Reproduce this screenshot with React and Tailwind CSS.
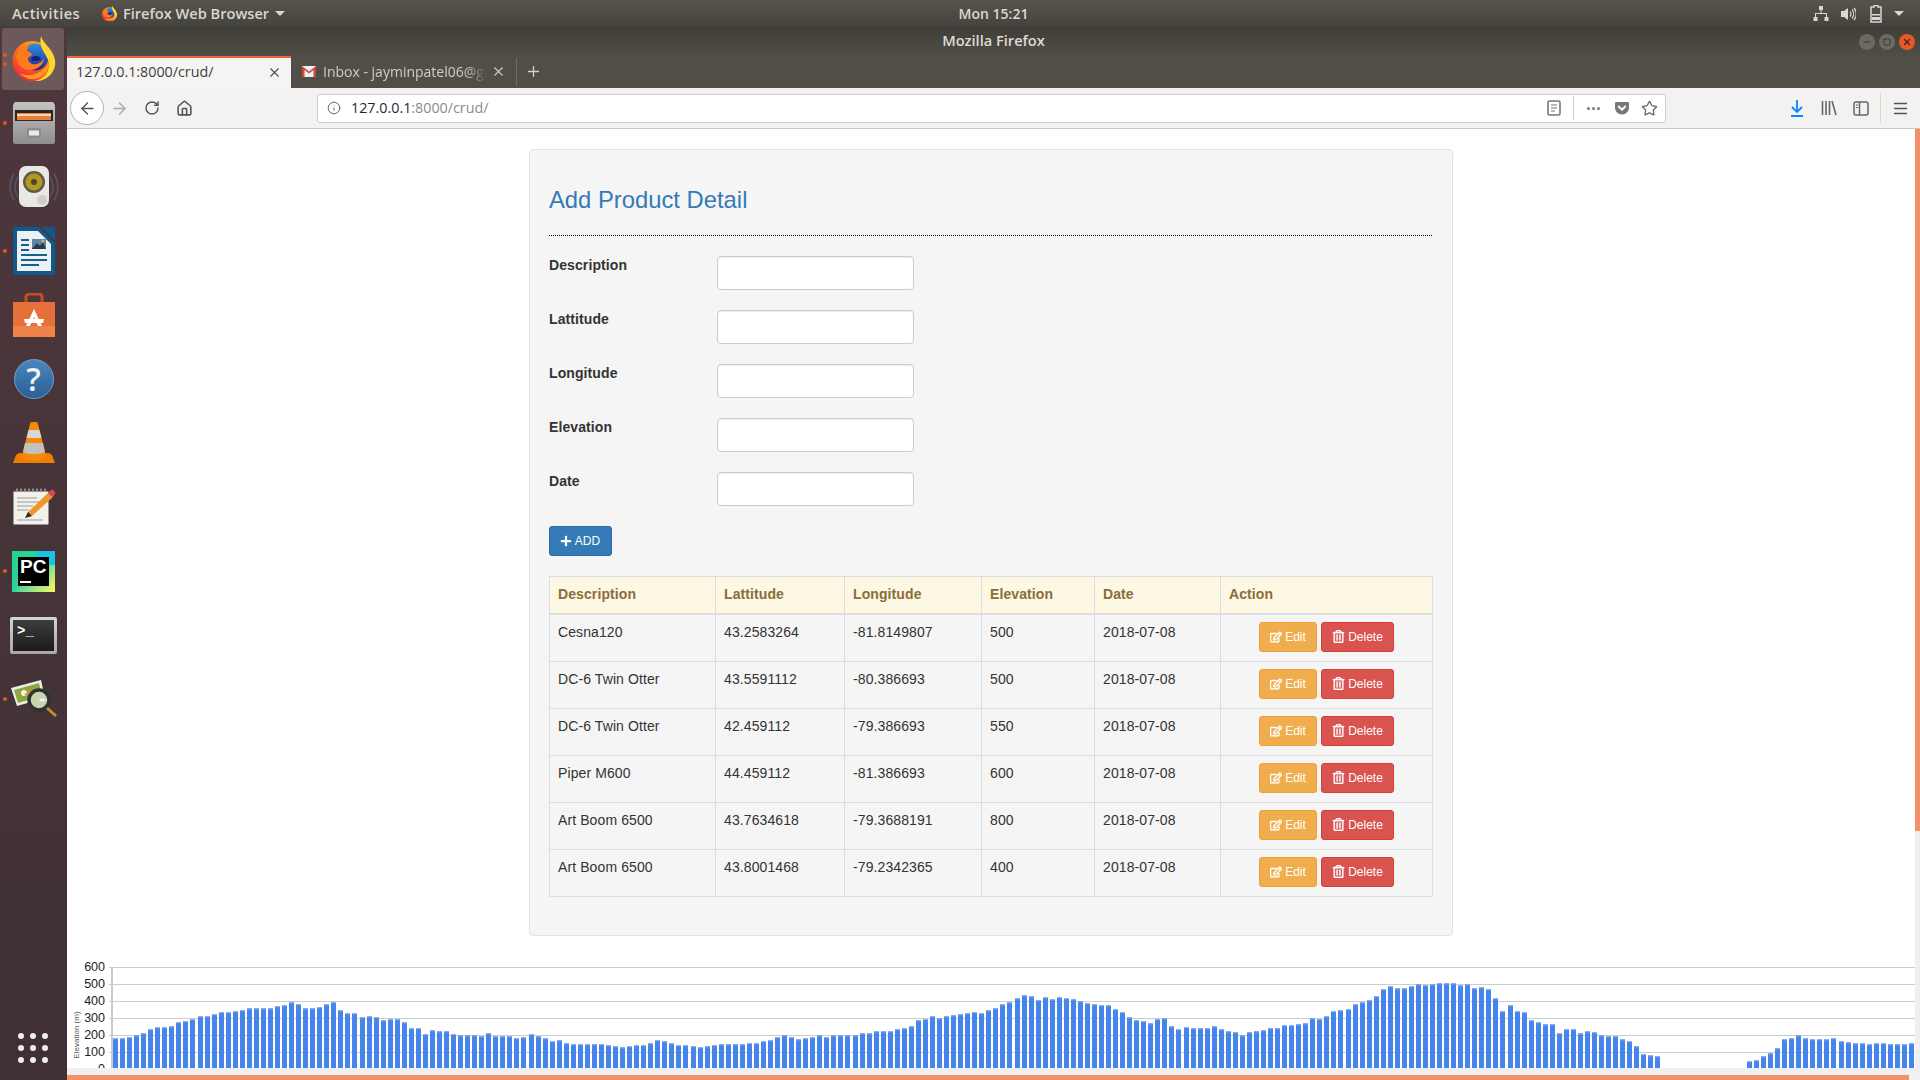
import React from 'react'
import { ArrowLeft, ArrowRight, RotateCw, House, Info, X, Plus, Star, Minus, Square } from 'lucide-react'
import { FaPlus, FaRegEdit, FaRegTrashAlt, FaGetPocket } from 'react-icons/fa'

const products = [
  ['Cesna120', '43.2583264', '-81.8149807', '500', '2018-07-08'],
  ['DC-6 Twin Otter', '43.5591112', '-80.386693', '500', '2018-07-08'],
  ['DC-6 Twin Otter', '42.459112', '-79.386693', '550', '2018-07-08'],
  ['Piper M600', '44.459112', '-81.386693', '600', '2018-07-08'],
  ['Art Boom 6500', '43.7634618', '-79.3688191', '800', '2018-07-08'],
  ['Art Boom 6500', '43.8001468', '-79.2342365', '400', '2018-07-08'],
]

const fields = ['Description', 'Lattitude', 'Longitude', 'Elevation', 'Date']

// bar tops, read off the reference at 3x (354 is the clipped bottom of the plot)
const barTops = [
  265, 265, 262, 256, 250, 238, 232, 232, 229, 217, 214, 208, 199, 199, 193, 187, 187, 184, 181, 175,
  175, 175, 175, 169, 166, 157, 163, 175, 175, 172, 163, 157, 181, 190, 190, 202, 199, 202, 211, 208,
  208, 217, 235, 235, 253, 241, 244, 244, 253, 256, 256, 256, 259, 250, 259, 259, 259, 265,
  262, 253, 259, 265, 274, 271, 280, 283, 283, 283, 283, 283, 286, 289, 292, 289, 286, 286, 280, 271,
  274, 280, 286, 286, 289, 292, 289, 286, 283, 283, 283, 283, 280, 280, 274, 271, 262, 256, 262, 268,
  265, 262, 256, 262, 256, 256, 256, 256, 250, 250, 244, 244, 244, 238,
  235, 229, 211, 208, 199, 205, 199, 196, 193, 190, 187, 190, 181, 175, 163, 157, 145, 136, 139, 151,
  142, 148, 142, 145, 148, 154, 160, 163, 166, 166, 178, 187, 202, 211, 214, 220, 208, 205, 229, 238,
  232, 235, 235, 235, 229, 238, 244, 247, 256, 247, 244, 241, 235, 235, 226, 226, 223, 220, 205, 208,
  199, 184, 181, 178, 163, 157, 151, 139, 118, 109, 115, 115, 109, 103,
  106, 103, 100, 100, 100, 106, 103, 115, 112, 118, 145, 184, 166, 184, 187, 211, 217, 223, 223, 250,
  238, 238, 250, 244, 247, 256, 259, 259, 268, 274, 289, 313, 316, 319,
  null, null, null, null, null, null, null, null, null, null, null, null,
  334, 331, 319, 310, 295, 268, 265, 256, 265, 268, 268, 268, 265, 274, 277, 280, 280, 283, 280, 280,
  283, 283, 283, 280,
]

const Firefox = ({ size = 48 }) => (
  <svg width={size} height={size} viewBox="0 0 48 48">
    <defs>
      <linearGradient id="ffBody" x1="0.8" y1="0" x2="0.2" y2="1">
        <stop offset="0" stopColor="#ffb21a" />
        <stop offset="0.5" stopColor="#ff6a1f" />
        <stop offset="1" stopColor="#e8263f" />
      </linearGradient>
      <linearGradient id="ffGlobe" x1="0.5" y1="0" x2="0.5" y2="1">
        <stop offset="0" stopColor="#2f8fe0" />
        <stop offset="1" stopColor="#23268f" />
      </linearGradient>
    </defs>
    <circle cx="22.5" cy="26" r="20" fill="url(#ffBody)" />
    <circle cx="25" cy="22" r="13.5" fill="url(#ffGlobe)" />
    <path d="M31 1c1 7 12 12 14 24 2 13-10 22-20 21 9-2 15-9 14-18-1-8-11-14-8-27z" fill="#ffd52e" />
    <path d="M39 28c0 9-8 16-16 16-5 0-10-2-13-6 5 3 12 3 18 0 5-2 8-6 11-10z" fill="#ff9a1f" />
    <path d="M6 22c2-6 7-11 14-12-2 2-3 4-3 6 3 1 5 2 5 4-2 1-4 2-4 4 0 4 5 6 9 5 3-1 6-3 7-6 0 6-6 12-14 12-8 0-13-6-14-13z" fill="#ff7a1a" />
    <path d="M22 22c3-2 8-1 9 2-2 2-7 3-10 1z" fill="#16207a" />
  </svg>
)

const FileCabinet = () => (
  <svg width="42" height="42" viewBox="0 0 42 42">
    <defs>
      <linearGradient id="cabinet" x1="0" y1="0" x2="0" y2="1">
        <stop offset="0" stopColor="#c4c3c1" />
        <stop offset="1" stopColor="#8f8e8c" />
      </linearGradient>
    </defs>
    <path d="M2 0h38l2 3v37a2 2 0 0 1-2 2H2a2 2 0 0 1-2-2V3z" fill="url(#cabinet)" />
    <rect x="2" y="8" width="38" height="11" fill="#2b2725" />
    <rect x="4" y="11" width="34" height="7" fill="#e5803f" />
    <rect x="4" y="12" width="34" height="2" fill="#f6d4b4" />
    <rect x="14" y="26" width="14" height="10" rx="1" fill="#8c8b89" />
    <rect x="16" y="28.500" width="10" height="5" fill="#eceae8" />
  </svg>
)

const SpeakerIcon = () => (
  <svg width="50" height="42" viewBox="0 0 50 42">
    <path d="M5 8a24 24 0 0 0 0 26M9 11a18 18 0 0 0 0 20M45 8a24 24 0 0 1 0 26M41 11a18 18 0 0 1 0 20" fill="none" stroke="#5d6a80" strokeWidth="1.500" opacity="0.6" />
    <rect x="10" y="0" width="30" height="41" rx="7" fill="#e9e8e3" />
    <circle cx="25" cy="16" r="11" fill="#5c5a52" />
    <circle cx="25" cy="16" r="8.500" fill="#b39a1e" />
    <circle cx="25" cy="16" r="3" fill="#4a4536" />
    <circle cx="33" cy="34" r="5" fill="#cfcec9" />
  </svg>
)

const WriterIcon = () => (
  <svg width="42" height="48" viewBox="0 0 42 48">
    <path d="M2 0h24l16 16v30a2 2 0 0 1-2 2H2a2 2 0 0 1-2-2V2a2 2 0 0 1 2-2z" fill="#0f5a8d" />
    <path d="M29 0h11a2 2 0 0 1 2 2v11z" fill="#0f5a8d" />
    <path d="M4 4h21l13 13v27H4z" fill="#eef1f4" />
    <path d="M8 12h8v2H8zM8 17h8v2H8zM8 22h8v2H8zM8 27h26v2H8zM8 32h26v2H8zM8 37h18v2H8z" fill="#15608f" />
    <rect x="19" y="12" width="14" height="10" fill="#5f86a8" />
    <path d="M19 22l5-6 3 3 3-4 3 7z" fill="#273b4c" />
    <circle cx="30" cy="14" r="1.500" fill="#e8b33c" />
  </svg>
)

const StoreBag = () => (
  <svg width="44" height="44" viewBox="0 0 44 44">
    <path d="M14 11V4a3 3 0 0 1 3-3h10a3 3 0 0 1 3 3v7" fill="none" stroke="#c44f1f" strokeWidth="3" />
    <path d="M1 9h42v35H1z" fill="#e5703a" />
    <path d="M1 33h42v11H1z" fill="#ef8347" />
    <path d="M22 16l8 17h-4l-4-9-4 9h-4z" fill="#fff" />
    <path d="M12 26h20l-1 4H13z" fill="#fff" />
  </svg>
)

const HelpIcon = () => (
  <div className="w-[40px] h-[40px] rounded-full bg-linear-to-b from-[#4a86bf] to-[#2c5f96] border border-[#6f9cc8] flex items-center justify-center text-[#eef3f8] text-[32px] font-['Open_Sans',sans-serif] font-semibold leading-none">
    ?
  </div>
)

const VlcCone = () => (
  <svg width="42" height="42" viewBox="0 0 42 42">
    <path d="M3 33l3-2h30l3 2 3 8H0z" fill="#f07d00" />
    <path d="M17 2a2 2 0 0 1 2-2h4a2 2 0 0 1 2 2l8 32a12 5 0 0 1-24 0z" fill="#f58a0a" />
    <path d="M15.500 8h11l2 8h-15z" fill="#d9d7d3" />
    <path d="M12 21h18l2 9c-6 3-16 3-22 0z" fill="#c3c1bc" />
  </svg>
)

const NotepadIcon = () => (
  <svg width="46" height="40" viewBox="0 0 46 40">
    <rect x="2" y="4" width="36" height="34" rx="1" fill="#f2f1ec" stroke="#3a3a3a" strokeWidth="1" />
    <path d="M5 3h30" stroke="#8a8a8a" strokeWidth="3" strokeDasharray="2 2" />
    <path d="M6 11h20M6 15h26M6 19h16M6 23h12M6 33h26" stroke="#9a9a9a" strokeWidth="1" />
    <path d="M14 31l3-6 20-19 5 4-21 19z" fill="#f0962a" />
    <path d="M37 6l3-3c2-1 5 2 4 4l-2 3z" fill="#d8475a" />
    <path d="M14 31l3-6 4 4z" fill="#2b2b2b" />
  </svg>
)

const PyCharmIcon = () => (
  <div className="relative w-[43px] h-[41px] bg-linear-to-br from-[#21d789] via-[#2fd0a0] to-[#fcf84a] p-[6px]">
    <div className="absolute right-0 top-0 w-[18px] h-[14px] bg-[#19c3e6]" />
    <div className="relative w-full h-full bg-black text-white font-bold text-[19px] leading-[20px] px-[2px] flex flex-col">
      <span>PC</span>
      <span className="w-[11px] h-[2px] bg-white mt-[4px]" />
    </div>
  </div>
)

const TerminalIcon = () => (
  <div className="w-[47px] h-[37px] rounded-[2px] bg-linear-to-b from-[#d5d4d1] to-[#a8a7a4] p-[3px]">
    <div className="w-full h-full bg-linear-to-b from-[#3d3d3d] to-[#1c1c1c] text-white text-[14px] font-bold leading-[22px] pl-[4px] font-['Liberation_Mono',monospace]">
      &gt;_
    </div>
  </div>
)

const ImageLens = () => (
  <svg width="46" height="38" viewBox="0 0 46 38">
    <path d="M0 8l30-8 4 18-28 8z" fill="#eef0e6" />
    <path d="M3 10l25-7 3 13-24 7z" fill="#8ba83c" />
    <circle cx="13" cy="13" r="3" fill="#f4f4ee" />
    <path d="M14 15l6-4" stroke="#e8922a" strokeWidth="2" />
    <circle cx="28" cy="20" r="10" fill="#c9d4ae" stroke="#2e3235" strokeWidth="3.500" />
    <path d="M28 20c3-2 6-1 7 0-3 2-5 2-7 0z" fill="#f4f4ee" />
    <path d="M36 28l9 8" stroke="#c98a2a" strokeWidth="3" />
  </svg>
)

const dockApps = [
  { icon: <Firefox size={48} />, dots: 2, active: true },
  { icon: <FileCabinet />, dots: 1 },
  { icon: <SpeakerIcon />, dots: 0 },
  { icon: <WriterIcon />, dots: 1 },
  { icon: <StoreBag />, dots: 0 },
  { icon: <HelpIcon />, dots: 0 },
  { icon: <VlcCone />, dots: 0 },
  { icon: <NotepadIcon />, dots: 0 },
  { icon: <PyCharmIcon />, dots: 1 },
  { icon: <TerminalIcon />, dots: 0 },
  { icon: <ImageLens />, dots: 1 },
]

const DockItem = ({ icon, dots, active }) => (
  <div className="relative h-[64px] w-[67px] flex items-center justify-center">
    {active && <div className="absolute left-[2px] top-[1px] w-[62px] h-[62px] rounded-[3px] bg-[#6d585a]" />}
    <div className="relative">{icon}</div>
    {dots > 0 && (
      <div className="absolute left-[3px] top-0 h-full flex flex-col justify-center gap-[5px]">
        {Array.from({ length: dots }).map((_, i) => (
          <span key={i} className="block w-[4px] h-[4px] rounded-full bg-[#e9541f]" />
        ))}
      </div>
    )}
  </div>
)

const Dock = () => (
  <div className="w-[67px] flex-shrink-0 flex flex-col bg-linear-to-b from-[#4e373c] to-[#3e3034]">
    {dockApps.map((app, i) => (
      <DockItem key={i} {...app} />
    ))}
    <div className="mt-auto mb-[17px] ml-[18px] grid grid-cols-3 gap-[6px] w-[30px]">
      {Array.from({ length: 9 }).map((_, i) => (
        <span key={i} className="block w-[6px] h-[6px] rounded-full bg-[#eeeeec]" />
      ))}
    </div>
  </div>
)

const TopPanel = () => (
  <div className="h-[27px] flex-shrink-0 grid grid-cols-[1fr_auto_1fr] items-center bg-linear-to-b from-[#57544c] to-[#45433d] text-[#d9d7d1] text-[14.6px] font-['Open_Sans',sans-serif] font-semibold">
    <div className="flex items-center pl-[12px]">
      <span className="tracking-[0.4px]">Activities</span>
      <span className="ml-[21px]"><Firefox size={17} /></span>
      <span className="ml-[5px]">Firefox Web Browser</span>
      <span className="ml-[6px] border-x-[5px] border-x-transparent border-t-[5px] border-t-[#d9d7d1]" />
    </div>
    <span className="ml-[67px] text-[14px]">Mon 15:21</span>
    <div className="flex items-center justify-end pr-[16px] text-[#d9d7d1]">
      <svg width="16" height="16" viewBox="0 0 16 16" fill="currentColor">
        <path d="M6 0h4v4H8.500v3H14v4h1.500v4h-4v-4H13V8H3v3h1.500v4h-4v-4H2V7h5.500V4H6z" />
      </svg>
      <svg className="ml-[11px]" width="16" height="16" viewBox="0 0 16 16" fill="none" stroke="currentColor">
        <path d="M1 5h3l4-3v12l-4-3H1z" fill="currentColor" stroke="none" />
        <path d="M10 5.500a4 4 0 0 1 0 5M12 3.500a7 7 0 0 1 0 9M14 2a9 9 0 0 1 0 12" strokeWidth="1.200" />
      </svg>
      <svg className="ml-[14px]" width="12" height="18" viewBox="0 0 12 18" fill="none" stroke="currentColor">
        <path d="M4 .5h4V2h3v15H1V2h3z" strokeWidth="1.500" />
        <path d="M2 9h8v1.500H2zM2 12h8v3H2z" fill="currentColor" stroke="none" />
      </svg>
      <span className="ml-[12px] border-x-[5px] border-x-transparent border-t-[5px] border-t-[#d9d7d1]" />
    </div>
  </div>
)

const WindowTitle = () => (
  <div className="h-[29px] flex-shrink-0 grid grid-cols-[1fr_auto_1fr] items-center text-[#dfdbd2] text-[14.6px] font-['Open_Sans',sans-serif] font-semibold">
    <span />
    <span className="pb-[2px]">Mozilla Firefox</span>
    <div className="flex justify-end gap-[4px] pr-[5px]">
      <span className="w-[16px] h-[16px] rounded-full bg-[#6b6962] flex items-center justify-center text-[#35332e]">
        <Minus size={10} strokeWidth={2.5} />
      </span>
      <span className="w-[16px] h-[16px] rounded-full bg-[#6b6962] flex items-center justify-center text-[#35332e]">
        <Square size={8} strokeWidth={2.5} />
      </span>
      <span className="w-[16px] h-[16px] rounded-full bg-[#e5592a] flex items-center justify-center text-[#4a2114]">
        <X size={10} strokeWidth={3} />
      </span>
    </div>
  </div>
)

const TabStrip = () => (
  <div className="h-[32px] flex-shrink-0 flex items-stretch font-['Open_Sans',sans-serif] text-[14.3px]">
    <div className="w-[224px] bg-[#f5f4f2] border-t-[2px] border-[#e9683c] flex items-center pl-[9px] pr-[9px] pb-[2px] text-[#3f3f3f]">
      <span className="flex-1">127.0.0.1:8000/crud/</span>
      <X size={15} strokeWidth={1.7} className="text-[#4a4a4a]" />
    </div>
    <div className="w-[226px] flex items-center pl-[11px] pr-[10px] pb-[1px] text-[#cfcdc7] border-r border-[#6d6b64] my-[2px]">
      <svg width="14" height="11" viewBox="0 0 14 11" className="flex-shrink-0">
        <rect width="14" height="11" fill="#eeeeee" />
        <path d="M0 0l7 5.500L14 0v11h-2.500V4L7 7.500 2.500 4v7H0z" fill="#d44638" />
      </svg>
      <span className="ml-[7px] w-[163px] text-[14px] whitespace-nowrap overflow-hidden [mask-image:linear-gradient(to_right,black_88%,transparent)]">
        Inbox - jayminpatel06@gmail.com
      </span>
      <X size={15} strokeWidth={1.7} className="ml-auto" />
    </div>
    <div className="flex items-center pl-[8px] pb-[2px] text-[#d5d3cd]">
      <Plus size={17} strokeWidth={1.8} />
    </div>
  </div>
)

const Toolbar = () => (
  <div className="h-[41px] flex-shrink-0 flex items-center bg-[#f3f2f0] border-b border-[#c9c7c4] text-[#555] font-['Open_Sans',sans-serif]">
    <div className="ml-[3px] w-[34px] h-[34px] rounded-full bg-white border border-[#b5b5b5] flex items-center justify-center">
      <ArrowLeft size={19} strokeWidth={1.8} />
    </div>
    <ArrowRight size={19} strokeWidth={1.8} className="ml-[6px] text-[#aaa]" />
    <RotateCw size={16} strokeWidth={2.2} className="ml-[15px]" />
    <House size={17} strokeWidth={2.2} className="ml-[16px]" />
    <div className="ml-[124px] w-[1349px] h-[29px] rounded-[3px] bg-white border border-[#cfcdca] flex items-center pl-[9px] pr-[7px] text-[14.3px]">
      <Info size={14} strokeWidth={1.7} className="text-[#666]" />
      <span className="ml-[10px] text-[#1f2a36]">127.0.0.1</span>
      <span className="text-[#8b8b8b]">:8000/crud/</span>
      <svg className="ml-auto" width="14" height="16" viewBox="0 0 14 16" fill="none" stroke="#777" strokeWidth="1.600">
        <rect x="1" y="1" width="12" height="14" rx="1.500" />
        <path d="M4 5h6M4 8h6M4 11h4" strokeWidth="1.200" />
      </svg>
      <span className="ml-[12px] w-px h-[24px] bg-[#cfcdca]" />
      <span className="ml-[13px] flex gap-[2px]">
        <i className="block w-[3px] h-[3px] rounded-full bg-[#777]" />
        <i className="block w-[3px] h-[3px] rounded-full bg-[#777]" />
        <i className="block w-[3px] h-[3px] rounded-full bg-[#777]" />
      </span>
      <FaGetPocket size={16} className="ml-[14px] text-[#777]" />
      <Star size={17} strokeWidth={1.8} className="ml-[11px] text-[#666]" />
    </div>
    <svg className="ml-[124px]" width="14" height="17" viewBox="0 0 14 17" fill="none" stroke="#0a84ff" strokeWidth="1.800">
      <path d="M7 0v12M2 7l5 5 5-5M1 16h12" />
    </svg>
    <svg className="ml-[17px]" width="16" height="16" viewBox="0 0 16 16" fill="none" stroke="#666" strokeWidth="1.600">
      <path d="M1.500 1v14M5 1v14M8.500 1v14M11 1l4 14" />
    </svg>
    <svg className="ml-[16px]" width="16" height="15" viewBox="0 0 16 15" fill="none" stroke="#666" strokeWidth="1.500">
      <rect x="1" y="1" width="14" height="13" rx="2" />
      <path d="M6.500 1v13" />
      <path d="M3 4h2M3 6.500h2" strokeWidth="1" />
    </svg>
    <span className="ml-[11px] w-px h-[30px] bg-[#d9d7d4]" />
    <svg className="ml-[13px]" width="13" height="13" viewBox="0 0 13 13" fill="none" stroke="#555" strokeWidth="1.600">
      <path d="M0 1.500h13M0 6.500h13M0 11.500h13" />
    </svg>
  </div>
)

const FormRow = ({ label }) => (
  <div className="flex mb-[20px]">
    <label className="w-[168px] font-bold text-[14px] leading-[20px] -mt-px tracking-[0.1px]">{label}</label>
    <input className="w-[197px] h-[34px] bg-white border border-[#ccc] rounded-[4px] shadow-[inset_0_1px_1px_rgba(0,0,0,0.075)]" />
  </div>
)

const ProductTable = () => (
  <table className="w-[883px] table-fixed border-collapse text-[14px] leading-[20px] tracking-[0.1px]">
    <colgroup>
      <col className="w-[166px]" />
      <col className="w-[129px]" />
      <col className="w-[137px]" />
      <col className="w-[113px]" />
      <col className="w-[126px]" />
      <col className="w-[212px]" />
    </colgroup>
    <thead>
      <tr className="bg-[#fcf8e3] text-[#8a6d3b]">
        {['Description', 'Lattitude', 'Longitude', 'Elevation', 'Date', 'Action'].map(h => (
          <th key={h} className="border border-[#ddd] border-b-2 px-[8px] pt-[7px] pb-[9px] text-left font-bold">{h}</th>
        ))}
      </tr>
    </thead>
    <tbody>
      {products.map((row, i) => (
        <tr key={i}>
          {row.map((cell, j) => (
            <td key={j} className="border border-[#ddd] px-[8px] pt-[7px] pb-[9px] align-top">{cell}</td>
          ))}
          <td className="border border-[#ddd] px-[8px] pt-[7px] pb-[9px]">
            <div className="flex justify-center gap-[4px] text-white text-[12px] tracking-normal">
              <button className="w-[58px] h-[30px] rounded-[3px] bg-[#f0ad4e] border border-[#eea236] flex items-center justify-center gap-[3px]">
                <FaRegEdit size={12} stroke="currentColor" strokeWidth={24} /> Edit
              </button>
              <button className="w-[73px] h-[30px] rounded-[3px] bg-[#d9534f] border border-[#d43f3a] flex items-center justify-center gap-[3px]">
                <FaRegTrashAlt size={13} stroke="currentColor" strokeWidth={12} className="-mt-[2px]" /> Delete
              </button>
            </div>
          </td>
        </tr>
      ))}
    </tbody>
  </table>
)

const ElevationChart = () => (
  <svg width="1848" height="118" className="mt-[14px] block font-['Liberation_Sans',sans-serif]">
    {[600, 500, 400, 300, 200, 100, 0].map((v, i) => (
      <g key={v}>
        <text x="38" y={17 * i + 21} textAnchor="end" fontSize="12.500" fill="#222">{v}</text>
        {i < 6 && <rect x="42" y={17 + 17 * i} width="1806" height="1" fill="#ccc" />}
      </g>
    ))}
    <rect x="44" y="17" width="2" height="101" fill="#ccc" />
    <text transform="translate(12 85) rotate(-90)" textAnchor="middle" fontSize="8" fill="#555">Elevation (m)</text>
    {barTops.map((top, i) => top !== null && (
      <g key={i}>
        <rect x={Math.round(46 + i * 7.043)} y={top / 3} width="5" height={118 - top / 3} fill="#4684ee" />
        <rect x={Math.round(46 + i * 7.043)} y={top / 3} width="5" height="1" fill="#86aaf0" />
      </g>
    ))}
  </svg>
)

export default function App() {
  return (
    <div className="w-[1920px] h-[1080px] overflow-hidden flex flex-col bg-[#3e3d37] font-['Liberation_Sans',sans-serif] text-[#333]">
      <TopPanel />
      <div className="flex-1 flex min-h-0">
        <Dock />
        <div className="flex-1 flex flex-col min-w-0">
          <div className="bg-linear-to-b from-[#3e3d37] via-[#514f47] to-[#514e47]">
            <WindowTitle />
            <TabStrip />
          </div>
          <Toolbar />
          <div className="flex-1 flex min-h-0 bg-white">
            <div className="flex-1 min-w-0 overflow-hidden">
              <div className="mx-auto mt-[20px] w-[924px] bg-[#f5f5f5] border border-[#e3e3e3] rounded-[4px] pl-[19px] pr-[20px] py-[19px]">
                <h3 className="mt-[18px] h-[26px] text-[23.8px] leading-[26px] text-[#337ab7]">Add Product Detail</h3>
                <hr className="mt-[22px] mb-[20px] border-0 border-t border-dotted border-black" />
                {fields.map(f => <FormRow key={f} label={f} />)}
                <button className="w-[63px] h-[30px] rounded-[3px] bg-[#337ab7] border border-[#2e6da4] text-white text-[12px] flex items-center justify-center gap-[3px] pr-[1px]">
                  <FaPlus size={12} /> ADD
                </button>
                <div className="mt-[20px] mb-[19px]">
                  <ProductTable />
                </div>
              </div>
              <ElevationChart />
            </div>
            <div className="w-[5px] bg-[#f0f0f0]">
              <div className="w-[5px] h-[702px] bg-[#f49069]" />
            </div>
          </div>
          <div className="h-[12px] flex-shrink-0 bg-[#f0f0f0] flex items-end">
            <div className="w-[1842px] h-[5px] bg-[#f49069]" />
          </div>
        </div>
      </div>
    </div>
  )
}
